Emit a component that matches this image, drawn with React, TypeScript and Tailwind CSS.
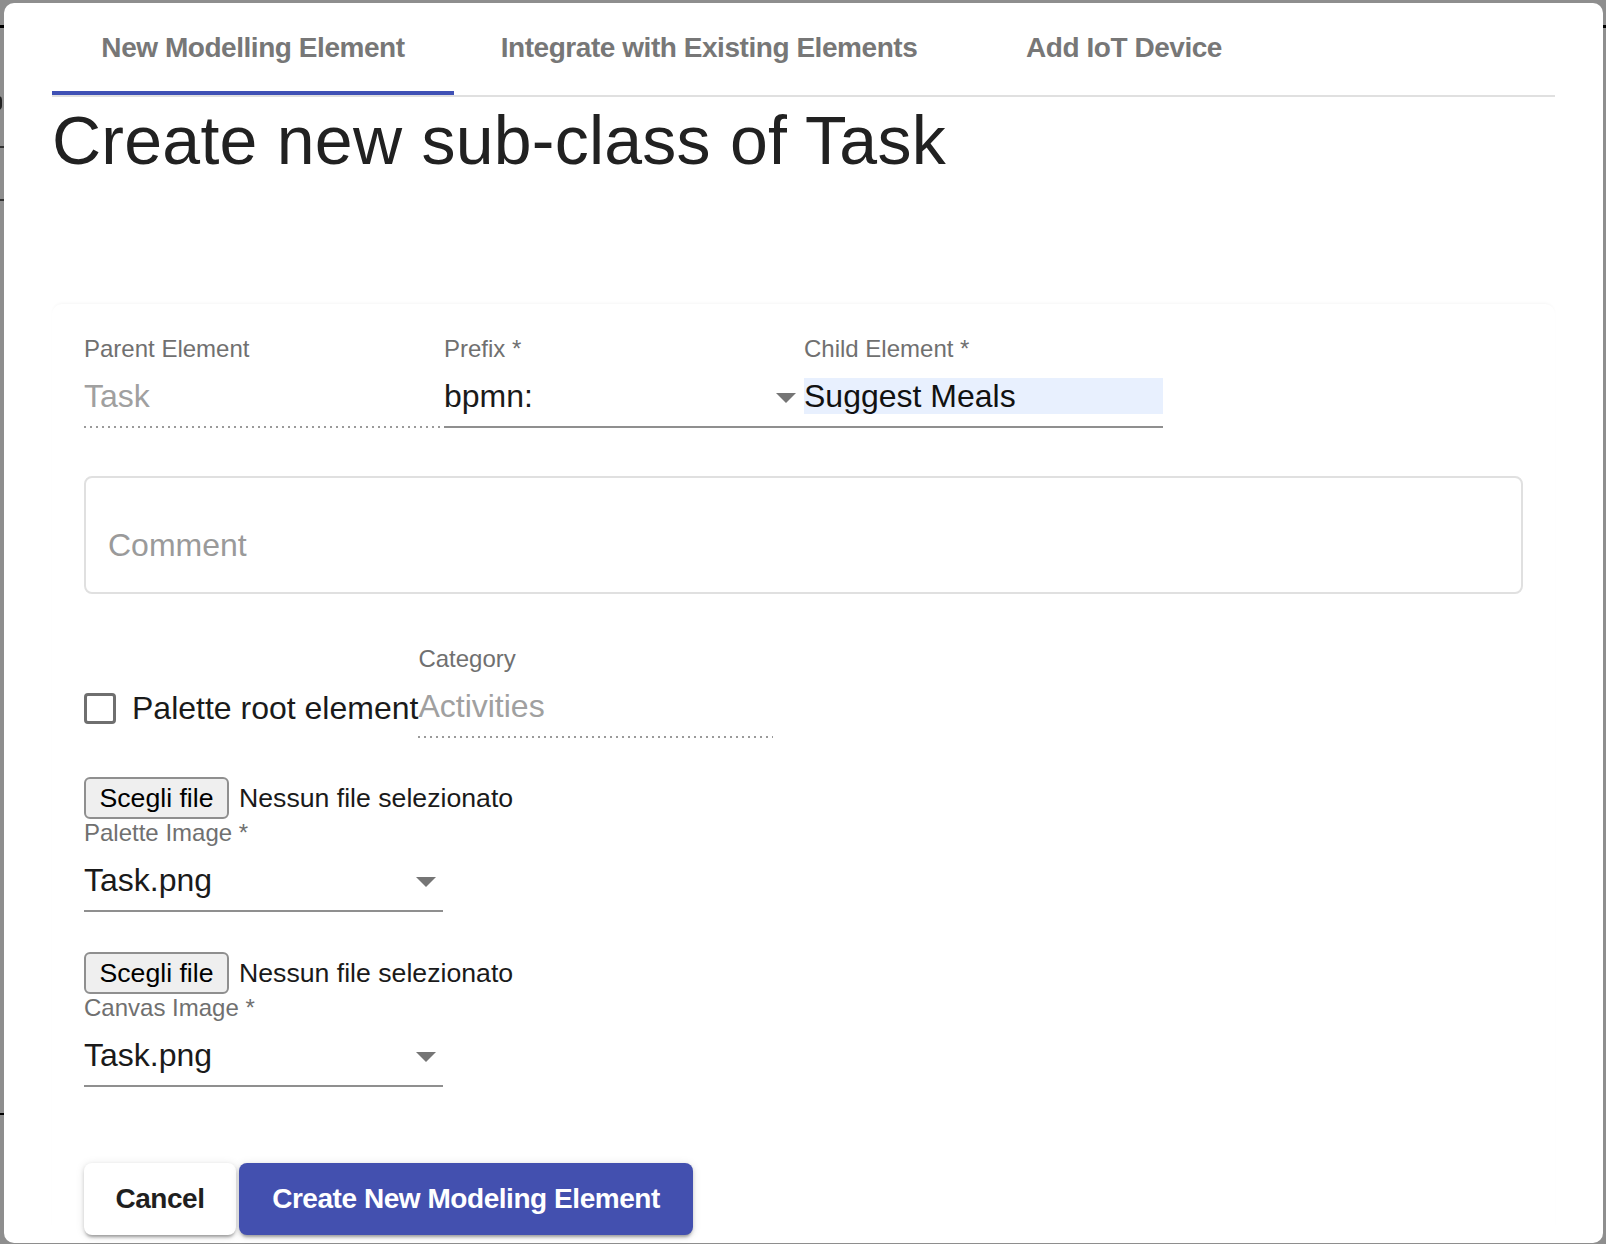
import type { ReactNode } from 'react';

const dotted =
  'h-[2px] bg-[linear-gradient(to_right,#9a9a9a_34%,transparent_0)] bg-[length:6px_2px] bg-repeat-x';

interface FieldProps {
  label: string;
  width: string;
  children: ReactNode;
  underline?: 'solid' | 'dotted';
  arrow?: boolean;
}

function Field({ label, width, children, underline = 'solid', arrow }: FieldProps) {
  return (
    <div className={`relative shrink-0 ${width}`}>
      <div className="h-[34px] text-[24px] leading-[34px] text-[#707070] whitespace-nowrap">{label}</div>
      <div className="mt-[7px] flex h-[46px] items-center text-[32px] leading-[46px] whitespace-nowrap">{children}</div>
      {underline === 'solid' ? (
        <div className="mt-[7px] h-[2px] bg-[#8f8f8f]" />
      ) : (
        <div className={`mt-[7px] ${dotted}`} />
      )}
      {arrow && (
        <svg className="absolute left-[332px] top-[61px]" width="20" height="10" viewBox="0 0 20 10">
          <polygon points="0,0 20,0 10,10" fill="#757575" />
        </svg>
      )}
    </div>
  );
}

function FilePicker() {
  return (
    <div className="flex h-[42px] items-center">
      <button className="h-[42px] w-[145px] rounded-[6px] border-2 border-[#8f8f8f] bg-[#efefef] text-[26.67px] leading-none text-black">
        Scegli file
      </button>
      <span className="ml-[10px] text-[26.67px] text-[#1a1a1a]">Nessun file selezionato</span>
    </div>
  );
}

const tabs = [
  { label: 'New Modelling Element', width: 'w-[402px]', active: true },
  { label: 'Integrate with Existing Elements', width: 'w-[510px]', active: false },
  { label: 'Add IoT Device', width: 'w-[320px]', active: false },
];

export default function App() {
  return (
    <div className="flex h-[1244px] w-[1606px] overflow-hidden bg-[#8e8e8e] font-['Liberation_Sans',Arial,sans-serif] text-[#212121]">
      {/* page behind the dialog, only a sliver shows */}
      <div className="relative w-[4px] shrink-0 overflow-hidden">
        <div className="absolute left-0 top-[25px] h-[3px] w-[4px] bg-black" />
        <div className="absolute left-[-2px] top-[96px] h-[14px] w-[4px] rounded-r-full border-y-2 border-r-2 border-[#222]" />
        <div className="absolute left-0 top-[146px] h-[2px] w-[4px] bg-[#333]" />
        <div className="absolute left-0 top-[199px] h-[2px] w-[4px] bg-[#333]" />
        <div className="absolute left-0 top-[1113px] h-[2px] w-[4px] bg-black" />
      </div>

      <div className="mt-[3px] h-[1240px] flex-1 rounded-[10px] bg-white px-[48px]">
        <div className="flex border-b-2 border-[#e0e0e0]">
          {tabs.map((tab) => (
            <div
              key={tab.label}
              className={`relative flex h-[92px] shrink-0 items-center justify-center pb-[2px] text-[28px] font-bold tracking-[-0.45px] text-[#777] ${tab.width}`}
            >
              {tab.label}
              {tab.active && <div className="absolute bottom-0 left-0 right-0 h-[4px] bg-[#3f51b5]" />}
            </div>
          ))}
        </div>

        <h1 className="mt-[1px] text-[68px] leading-[84px] font-normal tracking-[0.25px] text-[#212121]">
          Create new sub-class of Task
        </h1>

        <div className="mt-[122px] rounded-[10px] px-[32px] pt-[28px] shadow-[0_-2px_3px_-1px_rgba(0,0,0,0.04)]">
          <div className="flex">
            <Field label="Parent Element" width="w-[357px]" underline="dotted">
              <span className="text-[#a0a0a0]">Task</span>
            </Field>
            <div className="ml-[3px]">
              <Field label="Prefix *" width="w-[360px]" arrow>
                <span className="text-[#1a1a1a]">bpmn:</span>
              </Field>
            </div>
            <Field label="Child Element *" width="w-[359px]">
              <div className="h-[36px] w-full bg-[#e8f0fe] leading-[36px] text-[#111]">Suggest Meals</div>
            </Field>
          </div>

          <div className="mt-[48px] h-[118px] rounded-[8px] border-2 border-[#e0e0e0] pl-[22px]">
            <div className="mt-[44px] text-[32px] leading-[46px] text-[#9a9a9a]">Comment</div>
          </div>

          <div className="mt-[48px] flex items-start">
            <div className="mt-[43px] flex h-[46px] items-center">
              <div className="h-[31px] w-[32px] rounded-[4px] border-[3px] border-[#6f6f6f]" />
              <span className="ml-[16px] text-[32px] text-[#1a1a1a]">Palette root element</span>
            </div>
            <Field label="Category" width="w-[355px]" underline="dotted">
              <span className="text-[#a0a0a0]">Activities</span>
            </Field>
          </div>

          <div className="mt-[39px]">
            <FilePicker />
          </div>
          <div className="mt-[-3px]">
            <Field label="Palette Image *" width="w-[359px]" arrow>
              <span className="text-[#1a1a1a]">Task.png</span>
            </Field>
          </div>

          <div className="mt-[40px]">
            <FilePicker />
          </div>
          <div className="mt-[-3px]">
            <Field label="Canvas Image *" width="w-[359px]" arrow>
              <span className="text-[#1a1a1a]">Task.png</span>
            </Field>
          </div>

          <div className="mt-[76px] flex">
            <button className="h-[72px] w-[152px] rounded-[8px] bg-white text-[28px] font-bold tracking-[-0.45px] text-[#1f1f1f] shadow-[0_4px_3px_-2px_rgba(0,0,0,0.25),0_2px_4px_rgba(0,0,0,0.14),0_1px_10px_rgba(0,0,0,0.1)]">
              Cancel
            </button>
            <button className="ml-[3px] h-[72px] w-[454px] rounded-[8px] bg-[#4350af] text-[28px] font-bold tracking-[-0.45px] text-white shadow-[0_4px_3px_-2px_rgba(0,0,0,0.25),0_2px_4px_rgba(0,0,0,0.14),0_1px_10px_rgba(0,0,0,0.1)]">
              Create New Modeling Element
            </button>
          </div>
        </div>
      </div>

      <div className="relative w-[3px] shrink-0">
        <div className="absolute left-0 top-[25px] h-[3px] w-[3px] bg-black" />
      </div>
    </div>
  );
}
